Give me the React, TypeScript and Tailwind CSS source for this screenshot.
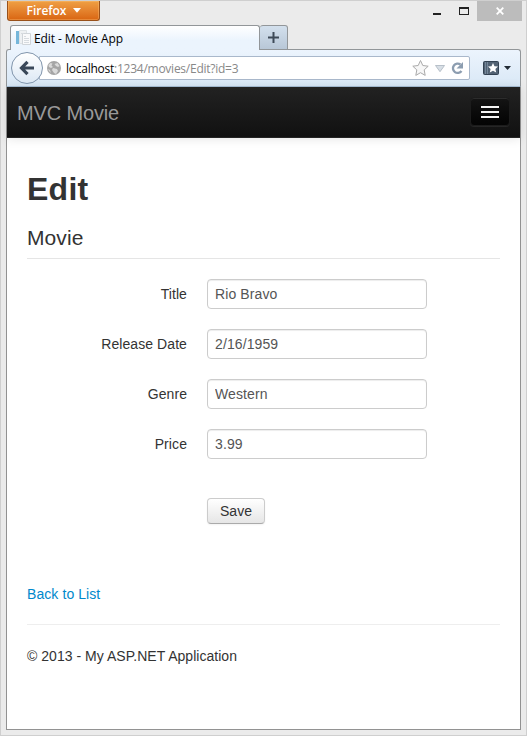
import React from "react";

const fields = [
  { label: "Title", value: "Rio Bravo" },
  { label: "Release Date", value: "2/16/1959" },
  { label: "Genre", value: "Western" },
  { label: "Price", value: "3.99" },
];

function TitleBar() {
  return (
    <div className="flex h-6 items-start pl-[6px]">
      <button className="flex h-5 w-[93px] items-center rounded-b-[3px] border border-t-0 border-[#98501a] bg-gradient-to-b from-[#efa044] to-[#d9650f] pl-[18px] font-['Open_Sans',sans-serif] text-[12px] font-semibold leading-none tracking-[-0.05px] text-white shadow-[inset_0_0_0_1px_rgba(255,200,130,0.35)]">
        <span className="w-[41px] whitespace-nowrap pt-px">Firefox</span>
        <svg className="ml-[6px]" width="8" height="5" viewBox="0 0 8 5"><path d="M0 0h8L4 4.700z" fill="#fff" /></svg>
      </button>
      <svg className="ml-auto mr-[11px] mt-[6px]" width="38" height="10" viewBox="0 0 38 10">
        <path d="M0 6h8v2H0z" fill="#222" />
        <path d="M26 0h10v8H26zM27 2v5h8V2z" fill="#222" fillRule="evenodd" />
      </svg>
      <div className="-ml-[5px] mr-[4px] flex h-5 w-[45px] items-center justify-center bg-[#bcbcbc]">
        <svg width="8" height="8" viewBox="0 0 8 8"><path d="M.7.7l6.600 6.600M7.300.7L.7 7.300" stroke="#fff" strokeWidth="1.800" /></svg>
      </div>
    </div>
  );
}

function TabStrip() {
  return (
    <div className="relative z-10 -mb-px flex h-[25px] items-start pl-[9px]">
      <div className="flex h-[25px] w-[250px] items-center rounded-t-[3px] border border-b-0 border-[#929699] bg-gradient-to-b from-white to-[#ebf4fd] to-60% pl-[5px]">
        <svg width="16" height="16" viewBox="0 0 16 16">
          <path d="M0 1h3v13H0z" fill="#74b6da" />
          <path d="M3.500.5h7v13h-7z" fill="#eef1f3" stroke="#dde2e5" />
          <path d="M6.500 3.500h8v11h-8z" fill="#f9fafb" stroke="#d0d5d9" />
          <path d="M8 6.500h2M8 8.500h5M8 10.500h5M8 12.500h5M5 3.500h3" fill="none" stroke="#d6dbdf" />
        </svg>
        <span className="ml-[2px] whitespace-nowrap pt-[2px] font-['Open_Sans',sans-serif] text-[12px] leading-none tracking-[-0.1px] text-black">Edit - Movie App</span>
      </div>
      <div className="flex h-[25px] w-[28px] items-center justify-center rounded-t-[3px] border border-l-0 border-[#929699] bg-gradient-to-b from-[#d3e0ed] to-[#b8c7d7]">
        <svg width="11" height="11" viewBox="0 0 11 11"><path d="M4.500 0h2v4.500H11v2H6.500V11h-2V6.500H0v-2h4.500z" fill="#3e4a58" /></svg>
      </div>
    </div>
  );
}

function Toolbar() {
  return (
    <div className="flex h-[38px] items-center rounded-t-[3px] border border-[#929699] border-b-[#a7bfd6] bg-gradient-to-b from-[#ecf4fd] to-[#d9e8f6]">
      <div className="z-10 ml-[4px] flex size-8 shrink-0 items-center justify-center rounded-full border border-[#8195ac] bg-gradient-to-b from-white to-[#dce8f4]">
        <svg width="16" height="16" viewBox="0 0 16 16"><path d="M8.500 1.800L2.500 8l6 6.200M3 8h12" fill="none" stroke="#3a4859" strokeWidth="3.200" /></svg>
      </div>
      <div className="-ml-[4px] flex h-6 w-[431px] items-center rounded-r-[2px] border border-[#a9b8cb] bg-white">
        <svg className="ml-[7px] shrink-0" width="14" height="14" viewBox="0 0 14 14">
          <circle cx="7" cy="7" r="7" fill="#a5a5a5" />
          <path d="M1.500 4l2-2 2 .500-1 2 1.500 1.500-2 1-2-1zM7.500 3l3-1 2 3-1.500 1-2-1zM6 7l4 1 1 2-2 3-2-1-2-3zM1 8l2 1 1 3-2-2z" fill="#dadada" />
        </svg>
        <span className="ml-[5px] whitespace-nowrap pt-[2px] font-['Open_Sans',sans-serif] text-[12px] leading-none tracking-[-0.25px] text-[#888]"><span className="text-black">localhost</span>:1234/movies/Edit?id=3</span>
        <svg className="ml-auto mr-[4px]" width="54" height="18" viewBox="0 0 54 18">
          <path d="M9.500 1.500l2.300 5 5.400.7-4 3.700 1 5.500-4.700-2.700-4.700 2.700 1-5.500-4-3.700 5.400-.7z" fill="#f7f7f7" stroke="#aaa" />
          <path d="M24.500 6.500h9L29 12.700z" fill="#d8dfe6" stroke="#b7c0c9" />
          <path d="M49.500 5.500A4.700 4.700 0 1 0 50.500 12" fill="none" stroke="#8c9db0" strokeWidth="2.300" />
          <path d="M52 3v6.500h-6.500z" fill="#8c9db0" />
        </svg>
      </div>
      <svg className="ml-[13px]" width="29" height="15" viewBox="0 0 29 15">
        <rect x=".5" y=".5" width="15" height="13" rx="1" fill="#526273" stroke="#334252" />
        <path d="M2.500 1v12M4.500 1v12" stroke="#74879a" />
        <path d="M10 2l1.500 3.200 3.500.4-2.600 2.400.8 3.500-3.200-1.800-3.200 1.800.8-3.500L5 5.600l3.500-.4z" fill="#fff" />
        <path d="M21 5h7l-3.500 4z" fill="#222b35" />
      </svg>
    </div>
  );
}

function Navbar() {
  return (
    <div className="flex h-[51px] items-start justify-between border-b border-[#252525] bg-gradient-to-b from-[#222] to-[#111] px-[10px] pt-[10px] shadow-[0_1px_10px_rgba(0,0,0,0.1)]">
      <span className="mt-[6px] text-[20px] leading-5 tracking-[-0.15px] text-[#999]">MVC Movie</span>
      <button className="flex h-[29px] w-10 flex-col items-center gap-[3px] rounded border border-[#1c1c1c] bg-gradient-to-b from-[#151515] to-[#040404] pt-[8px] shadow-[inset_0_1px_0_rgba(255,255,255,0.1),0_1px_0_rgba(255,255,255,0.075)]">
        <span className="h-[2px] w-[18px] bg-[#f5f5f5]" />
        <span className="h-[2px] w-[18px] bg-[#f5f5f5]" />
        <span className="h-[2px] w-[18px] bg-[#f5f5f5]" />
      </button>
    </div>
  );
}

export default function App() {
  return (
    <div className="flex h-[736px] w-[527px] flex-col overflow-hidden border border-[#cfcfcf] bg-[#ebebeb] font-['Liberation_Sans',Arial,sans-serif] text-[14px] leading-5 text-[#333]">
      <TitleBar />
      <TabStrip />
      <div className="mx-[5px] mb-[5px] flex flex-1 flex-col">
        <Toolbar />
        <div className="flex-1 border border-t-0 border-[#929292] bg-white">
          <Navbar />
          <main className="px-5 pt-[31px]">
            <h1 className="text-[32px] font-bold leading-10 tracking-[0.25px]">Edit</h1>
            <h2 className="mt-[9px] h-[41px] border-b border-[#e5e5e5] text-[21px] leading-10 tracking-[0.1px]">Movie</h2>
            <form className="mt-5 flex flex-col gap-5">
              {fields.map((f) => (
                <label key={f.label} className="flex h-[30px] items-center">
                  <span className="w-40 text-right tracking-[0.08px]">{f.label}</span>
                  <input className="ml-5 h-[30px] w-[220px] rounded border border-[#ccc] bg-white px-[7px] py-1 text-[14px] leading-5 tracking-[0.1px] text-[#555] shadow-[inset_0_1px_1px_rgba(0,0,0,0.075)]" defaultValue={f.value} />
                </label>
              ))}
              <button type="button" className="ml-[180px] mt-[19px] h-[26px] w-[58px] rounded border border-[#ccc] border-b-[#aaa] bg-gradient-to-b from-white to-[#e6e6e6] text-[14px] leading-5 shadow-[0_1px_2px_rgba(0,0,0,0.05)]">Save</button>
            </form>
            <a className="mt-[60px] block tracking-[0.08px] text-[#0088cc]">Back to List</a>
            <hr className="mt-5 border-[#eee]" />
            <footer className="mt-[21px] tracking-[0.03px]">© 2013 - My ASP.NET Application</footer>
          </main>
        </div>
      </div>
    </div>
  );
}
